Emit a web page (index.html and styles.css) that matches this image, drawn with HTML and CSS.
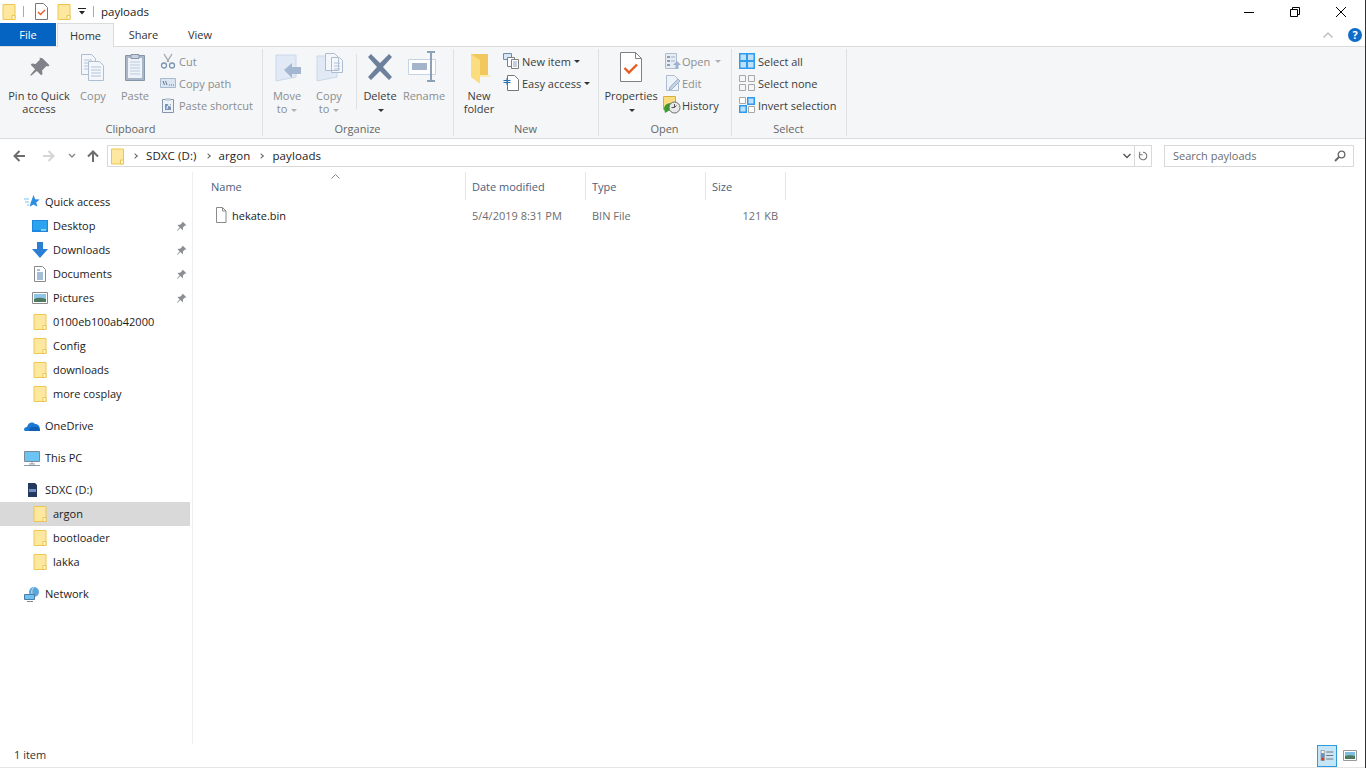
FILE: index.html
```html
<!DOCTYPE html>
<html lang="en">
<head>
    <meta charset="UTF-8">
    <meta name="viewport" content="width=device-width, initial-scale=1.0">
    <title>payloads</title>
    <link rel="stylesheet" href="styles.css">
</head>
<body>
    <svg class="defs" aria-hidden="true">
        <symbol id="folder" viewBox="0 0 13 16">
            <path d="M.5.5h12v15h-12z" fill="#fee8a0" stroke="#ecc64f"/>
            <path d="M9.500 15.500v-4h3v4z" fill="#fff6d5" stroke="#ecc64f"/>
        </symbol>
        <symbol id="pin" viewBox="0 0 16 16">
            <path d="M10 1l5 5-1 1-1-.4-3 3 .3 2.600-1 1-3-3-4 4-.9-.9 4-4-3-3 1-1 2.600.3 3-3L9 2z" fill="#8b8f94"/>
        </symbol>
        <symbol id="doc" viewBox="0 0 16 16">
            <path d="M3.500.5h6l3.500 3.500v11.500h-9.500z" fill="#fff" stroke="#8a8a8a"/>
            <path d="M9.500.5v3.500h3.500" fill="none" stroke="#8a8a8a"/>
        </symbol>
    </svg>

    <div class="titlebar">
        <svg class="qat-folder"><use href="#folder"/></svg>
        <span class="qat-sep"></span>
        <svg class="qat-props" viewBox="0 0 13 17">
            <path d="M.5.5h8l4 4v12h-12z" fill="#fff" stroke="#777"/>
            <path d="M3 9l2.500 2.500 4.500-4.500" fill="none" stroke="#e8562a" stroke-width="1.400"/>
        </svg>
        <svg class="qat-folder qat-folder2"><use href="#folder"/></svg>
        <svg class="qat-drop" viewBox="0 0 8 7"><path d="M0 0h8v1h-8zM1 3h6l-3 3.500z" fill="#222"/></svg>
        <span class="qat-sep qat-sep2"></span>
        <span class="title">payloads</span>
        <div class="win-btns">
            <svg viewBox="0 0 10 10"><path d="M0 5.500h10" stroke="#000"/></svg>
            <svg viewBox="0 0 10 10"><path d="M.5 2.500h7v7h-7zM2.500 2.500v-2h7v7h-2" fill="none" stroke="#000"/></svg>
            <svg viewBox="0 0 10 10"><path d="M0 0l10 10M10 0l-10 10" stroke="#000" stroke-width="1"/></svg>
        </div>
    </div>

    <div class="tabs">
        <div class="tab tab-file">File</div>
        <div class="tab tab-active">Home</div>
        <div class="tab tab-share">Share</div>
        <div class="tab tab-view">View</div>
        <svg class="ribbon-toggle" viewBox="0 0 10 6"><path d="M.5 5.500l4.500-4.500 4.500 4.500" fill="none" stroke="#b5b5b5" stroke-width="1.200"/></svg>
        <div class="help">?</div>
    </div>

    <div class="ribbon">
        <section class="group group-clipboard">
            <div class="group-body">
                <div class="big big-pin">
                    <svg class="big-icon" viewBox="0 0 32 32"><path d="M20 6l8 8-1.500 1.500-2-.6-5 5 .5 4.100-1.500 1.500-5-5-6.500 5.500-1-1 5.500-6.500-5-5 1.500-1.500 4.100.5 5-5-.6-2z" fill="#7f8389"/></svg>
                    <span class="big-label">Pin to Quick<br>access</span>
                </div>
                <div class="big big-copy off">
                    <svg class="big-icon" viewBox="0 0 32 32">
                        <path d="M4.500 3.500h10l4 4v16h-14z" fill="#f3f6fb" stroke="#aebdd0"/>
                        <path d="M11.500 10.500h11l4 4v15h-15z" fill="#f3f6fb" stroke="#aebdd0"/>
                        <path d="M7 9h8M7 12h4M7 15h4M7 18h4M14 16h10M14 19h10M14 22h10M14 25h10" stroke="#b4c4d8"/>
                    </svg>
                    <span class="big-label">Copy</span>
                </div>
                <div class="big big-paste off">
                    <svg class="big-icon" viewBox="0 0 32 32">
                        <path d="M6.500 4.500h19v25h-19z" fill="#a9b6c7" stroke="#8696aa"/>
                        <path d="M9 7h14v20h-14z" fill="#eef3fa"/>
                        <path d="M12 3.500h8v4h-8z" fill="#c8d2de" stroke="#8696aa"/>
                        <path d="M11 11h10M11 14h10M11 17h10M11 20h10M11 23h10" stroke="#bccadb"/>
                    </svg>
                    <span class="big-label">Paste</span>
                </div>
                <div class="small-col small-clipboard off">
                    <div class="small">
                        <svg viewBox="0 0 16 16"><path d="M4 1l5 8M12 1l-5 8" stroke="#a4a9b0" stroke-width="1.400"/><circle cx="4" cy="12.500" r="2.500" fill="none" stroke="#7b93b4" stroke-width="1.300"/><circle cx="12" cy="12.500" r="2.500" fill="none" stroke="#7b93b4" stroke-width="1.300"/></svg>
                        Cut
                    </div>
                    <div class="small">
                        <svg viewBox="0 0 16 16"><path d="M.5 3.500h15v9h-15z" fill="#dbe5f1" stroke="#a9b9cd"/><path d="M3 6l1.500 4M5.500 6l1.500 4M9 10h1M11 10h1M13 10h1" stroke="#65758a"/></svg>
                        Copy path
                    </div>
                    <div class="small">
                        <svg viewBox="0 0 16 16"><path d="M2.500 2.500h11v13h-11z" fill="#eef3fa" stroke="#8696aa"/><path d="M5.500 1h5v3h-5z" fill="#c8d2de"/><path d="M5 7h6v6h-6z" fill="#7b93b4"/><path d="M7 12c0-3 1-4 3-4M8 7.800h2.200v2" fill="none" stroke="#fff"/></svg>
                        Paste shortcut
                    </div>
                </div>
            </div>
            <div class="group-label">Clipboard</div>
        </section>

        <section class="group group-organize">
            <div class="group-body">
                <div class="big big-move off">
                    <svg class="big-icon" viewBox="0 0 32 32">
                        <path d="M5 4h20v22l-20 4z" fill="#e0e9f5" stroke="#cbd8e8"/>
                        <path d="M13 19l8-7v4h9v7h-9v4z" fill="#a3b7d0"/>
                    </svg>
                    <span class="big-label">Move<br>to <i class="caret"></i></span>
                </div>
                <div class="big big-copyto off">
                    <svg class="big-icon" viewBox="0 0 32 32">
                        <path d="M4 5h20v21l-20 4z" fill="#e0e9f5" stroke="#cbd8e8"/>
                        <path d="M12.500 2.500h9l4 4v13h-13zM18.500 6.500h8l3 3v12h-11z" fill="#f3f6fb" stroke="#aebdd0"/>
                        <path d="M21 12h6M21 15h6M21 18h6" stroke="#b4c4d8"/>
                    </svg>
                    <span class="big-label">Copy<br>to <i class="caret"></i></span>
                </div>
                <span class="vsep"></span>
                <div class="big big-delete">
                    <svg class="big-icon" viewBox="0 0 32 32"><path d="M4 6l3-3 9 9 9-9 3 3-9 10 9 10-3 3-9-9-9 9-3-3 9-10z" fill="#6d809c"/></svg>
                    <span class="big-label">Delete<br><i class="caret caret-dark"></i></span>
                </div>
                <div class="big big-rename off">
                    <svg class="big-icon" viewBox="0 0 32 32">
                        <path d="M.5 8.500h27v15h-27z" fill="#fff" stroke="#c5d3e4"/>
                        <path d="M4 12h15v7h-15z" fill="#a4b5cb"/>
                        <path d="M19 1h8M19 30h8M23 1v29" stroke="#8da0b8" stroke-width="2"/>
                    </svg>
                    <span class="big-label">Rename</span>
                </div>
            </div>
            <div class="group-label">Organize</div>
        </section>

        <section class="group group-new">
            <div class="group-body">
                <div class="big big-folder">
                    <svg class="big-icon" viewBox="0 0 32 32">
                        <path d="M8 3h17v21l-17 1z" fill="#f0c85c"/>
                        <path d="M8 3l9 6v24l-9-7z" fill="#fbdc7e"/>
                        <path d="M17 24h10v2h-10z" fill="#fdecb0"/>
                    </svg>
                    <span class="big-label">New<br>folder</span>
                </div>
                <div class="small-col small-new">
                    <div class="small">
                        <svg viewBox="0 0 16 16"><path d="M.5.5h8v6h-8z" fill="#d4e6f7" stroke="#6e8caa"/><path d="M4.500 4.500h7v9h-7z" fill="#fff" stroke="#7f7f7f"/><path d="M8.500 6.500h7v9h-7z" fill="#fff" stroke="#7f7f7f"/><path d="M10 9h4M10 11h4M10 13h4" stroke="#8aa3bf"/></svg>
                        New item <i class="caret caret-dark caret-inline"></i>
                    </div>
                    <div class="small">
                        <svg viewBox="0 0 16 16"><path d="M4.500.5h7l4 4v11h-11z" fill="#fff" stroke="#777"/><path d="M.5 5.500h7M.5 7.500h7M4 3v7" stroke="#2a6fb0"/></svg>
                        Easy access <i class="caret caret-dark caret-inline"></i>
                    </div>
                </div>
            </div>
            <div class="group-label">New</div>
        </section>

        <section class="group group-open">
            <div class="group-body">
                <div class="big big-props">
                    <svg class="big-icon" viewBox="0 0 32 32">
                        <path d="M5.500 1.500h15l6 6v23h-21z" fill="#fff" stroke="#808080"/>
                        <path d="M20.500 1.500v6h6" fill="none" stroke="#808080"/>
                        <path d="M9.500 17l4.500 4.500 8-8" fill="none" stroke="#ea5b23" stroke-width="2.400"/>
                    </svg>
                    <span class="big-label">Properties<br><i class="caret caret-dark"></i></span>
                </div>
                <div class="small-col small-open">
                    <div class="small off">
                        <svg viewBox="0 0 16 16"><path d="M.5.5h11v15h-11z" fill="#e6ecf4" stroke="#aebdd0"/><path d="M2 3h3v2h-3zM2 7h3v2h-3zM2 11h3v2h-3z" fill="#8da0b8"/><path d="M6 4h4M6 8h4" stroke="#9eb0c6"/><path d="M12 8l4 4h-2.500v4h-3v-4h-2.500z" fill="#9db2cd"/></svg>
                        Open <i class="caret caret-inline"></i>
                    </div>
                    <div class="small off">
                        <svg viewBox="0 0 16 16"><path d="M1.500.5h8l4 4v11h-12z" fill="#eef3fa" stroke="#aebdd0"/><path d="M13 4l2 2-8 8-3 1 1-3z" fill="#c4d3e6" stroke="#9db2cd"/></svg>
                        Edit
                    </div>
                    <div class="small small-history">
                        <svg viewBox="0 0 18 18"><path d="M.5.5h12v13h-12z" fill="#fbdd7f" stroke="#d4ae42"/><path d="M1 12c1-4 4-5 8-5l-2 7-5 3z" fill="#3a9c2e"/><circle cx="11.500" cy="11.500" r="5.500" fill="#e9e9e9" stroke="#6a6a6a"/><path d="M11.500 8v3.500h-3M11.500 11.500l2-2" stroke="#555" fill="none"/></svg>
                        History
                    </div>
                </div>
            </div>
            <div class="group-label">Open</div>
        </section>

        <section class="group group-select">
            <div class="group-body">
                <div class="small-col small-select">
                    <div class="small">
                        <svg viewBox="0 0 16 16"><path d="M0 0h16v16h-16z" fill="#2d9bef"/><path d="M1.500 1.500h5.500v5.500h-5.500zM9 1.500h5.500v5.500h-5.500zM1.500 9h5.500v5.500h-5.500zM9 9h5.500v5.500h-5.500z" fill="#bfe0f8"/></svg>
                        Select all
                    </div>
                    <div class="small">
                        <svg viewBox="0 0 16 16"><path d="M.5.5h6v6h-6zM9.500.5h6v6h-6zM.5 9.500h6v6h-6zM9.500 9.500h6v6h-6z" fill="none" stroke="#a8a8a8"/></svg>
                        Select none
                    </div>
                    <div class="small">
                        <svg viewBox="0 0 16 16"><path d="M.5.5h6v6h-6zM9.500 9.500h6v6h-6z" fill="#fff" stroke="#a8a8a8"/><path d="M8 0h8v8h-8zM0 8h8v8h-8z" fill="#2d9bef"/><path d="M9.500 1.500h5v5h-5zM1.500 9.500h5v5h-5z" fill="#bfe0f8"/></svg>
                        Invert selection
                    </div>
                </div>
            </div>
            <div class="group-label">Select</div>
        </section>
    </div>

    <div class="navbar">
        <div class="nav-btns">
            <svg class="nav-back" viewBox="0 0 12 12"><path d="M6.500 1l-5 5 5 5M1.500 6h10.500" fill="none" stroke="#6d6d6d" stroke-width="2"/></svg>
            <svg class="nav-fwd" viewBox="0 0 12 12"><path d="M5.500 1l5 5-5 5M10.500 6h-10.500" fill="none" stroke="#d5d5d5" stroke-width="2"/></svg>
            <svg class="nav-recent" viewBox="0 0 8 6"><path d="M1 1l3 3 3-3" fill="none" stroke="#888" stroke-width="1.400"/></svg>
            <svg class="nav-up" viewBox="0 0 12 12"><path d="M1 6.500l5-5 5 5M6 1.500v10.500" fill="none" stroke="#6d6d6d" stroke-width="2"/></svg>
        </div>
        <div class="address">
            <svg class="addr-folder"><use href="#folder"/></svg>
            <i class="crumb-sep"></i><span>SDXC (D:)</span>
            <i class="crumb-sep"></i><span>argon</span>
            <i class="crumb-sep"></i><span>payloads</span>
            <div class="addr-end">
                <svg class="addr-drop" viewBox="0 0 8 6"><path d="M.5 1l3.500 3.500 3.500-3.500" fill="none" stroke="#555" stroke-width="1.400"/></svg>
                <svg class="addr-refresh" viewBox="0 0 12 12"><path d="M6 1.500a4.500 4.500 0 1 1-4 2.500M2 1v3.500h3.500" fill="none" stroke="#777" stroke-width="1.300"/></svg>
            </div>
        </div>
        <div class="search">
            <span>Search payloads</span>
            <svg viewBox="0 0 12 12"><circle cx="7.500" cy="4.500" r="3.300" fill="none" stroke="#666" stroke-width="1.300"/><path d="M5 7l-4 4" stroke="#666" stroke-width="1.800"/></svg>
        </div>
    </div>

    <div class="main">
        <nav class="sidebar">
            <div class="side-row side-top">
                <svg viewBox="0 0 16 16"><path d="M9.500 1l1.700 4.200 4.500.3-3.500 2.900 1.200 4.400-3.900-2.400-3.900 2.400 1.200-4.400z" fill="#2c8de0"/><path d="M0 5h5M1 8h4M3 11h2" stroke="#7cc0f2"/></svg>
                Quick access
            </div>
            <div class="side-row side-sub">
                <svg viewBox="0 0 16 16"><path d="M0 2h16v12h-16z" fill="#1b87de"/><path d="M1 3h14v9h-14z" fill="#2ba4f0"/><path d="M9 12h5" stroke="#fff"/></svg>
                Desktop <svg class="side-pin"><use href="#pin"/></svg>
            </div>
            <div class="side-row side-sub">
                <svg viewBox="0 0 16 16"><path d="M5 0h6v7h5l-8 9-8-9h5z" fill="#2a7fd5"/></svg>
                Downloads <svg class="side-pin"><use href="#pin"/></svg>
            </div>
            <div class="side-row side-sub">
                <svg viewBox="0 0 16 16"><path d="M2.500.5h8l3 3v12h-11z" fill="#fff" stroke="#888"/><path d="M5 4h3M5 7h6M5 9h6M5 11h6M5 13h6" stroke="#4a7eb0"/></svg>
                Documents <svg class="side-pin"><use href="#pin"/></svg>
            </div>
            <div class="side-row side-sub">
                <svg viewBox="0 0 16 16"><path d="M.5 2.500h15v11h-15z" fill="#fff" stroke="#8a8a8a"/><path d="M2 4h12v5h-12z" fill="#8ec4e8"/><path d="M2 9c4-2 8-1 12 0v3h-12z" fill="#4c7a5e"/></svg>
                Pictures <svg class="side-pin"><use href="#pin"/></svg>
            </div>
            <div class="side-row side-sub"><svg><use href="#folder"/></svg>0100eb100ab42000</div>
            <div class="side-row side-sub"><svg><use href="#folder"/></svg>Config</div>
            <div class="side-row side-sub"><svg><use href="#folder"/></svg>downloads</div>
            <div class="side-row side-sub"><svg><use href="#folder"/></svg>more cosplay</div>

            <div class="side-row side-top side-gap">
                <svg viewBox="0 0 16 16"><path d="M0 12c0-2 1-3 3-3 1-4 5-6 8-3 3 0 5 2 5 6l-1 1h-14z" fill="#1a79d4"/><path d="M5 13c0-3 2-5 5-4 3-1 6 1 6 4z" fill="#0e5fb5"/></svg>
                OneDrive
            </div>
            <div class="side-row side-top side-gap">
                <svg viewBox="0 0 16 16"><path d="M.5 1.500h15v10h-15z" fill="#6cc4f4" stroke="#7d8a96"/><path d="M5 14h6M8 12v2M0 15.500h16" stroke="#8d99a5"/></svg>
                This PC
            </div>
            <div class="side-row side-top side-gap">
                <svg viewBox="0 0 16 16"><path d="M4 1h7l2 2v12h-9z" fill="#24395e"/><path d="M5 7h7v3h-7z" fill="#6d8fc0"/></svg>
                SDXC (D:)
            </div>
            <div class="side-row side-sub side-selected"><svg><use href="#folder"/></svg>argon</div>
            <div class="side-row side-sub"><svg><use href="#folder"/></svg>bootloader</div>
            <div class="side-row side-sub"><svg><use href="#folder"/></svg>lakka</div>

            <div class="side-row side-top side-gap">
                <svg viewBox="0 0 16 16"><circle cx="10" cy="6" r="5" fill="#5ba7dc"/><path d="M10 1c-3 3-3 7 0 10" fill="none" stroke="#cde6f6"/><path d="M.5 8.500h10v5h-10z" fill="#6cc4f4" stroke="#4e7da0"/><path d="M3 15.500h6" stroke="#7d8a96"/></svg>
                Network
            </div>
        </nav>

        <div class="files">
            <svg class="sort-arrow" viewBox="0 0 9 5"><path d="M.5 4.500l4-4 4 4" fill="none" stroke="#888"/></svg>
            <div class="file-head">
                <div class="col-name">Name</div>
                <div>Date modified</div>
                <div>Type</div>
                <div>Size</div>
            </div>
            <div class="file-row">
                <div class="col-name file-name"><svg><use href="#doc"/></svg>hekate.bin</div>
                <div>5/4/2019 8:31 PM</div>
                <div>BIN File</div>
                <div class="col-size">121 KB</div>
            </div>
        </div>
    </div>

    <div class="statusbar">
        <span class="status-text">1 item</span>
        <div class="view-btns">
            <div class="view-btn view-active">
                <svg viewBox="0 0 16 14"><path d="M.5.5h4v4h-4z" fill="#fff" stroke="#888"/><path d="M.5 5h4v4h-4z" fill="#5b8fe0" stroke="#888"/><path d="M.5 9.500h4v4h-4z" fill="#d03a2a" stroke="#888"/><path d="M7 2.500h9M7 7h9M7 11.500h9" stroke="#777" stroke-width="1.400"/></svg>
            </div>
            <div class="view-btn view-thumb">
                <svg viewBox="0 0 14 11"><path d="M.5.500h13v10h-13z" fill="#fff" stroke="#999"/><path d="M2 2h10v4h-10z" fill="#7fbde0"/><path d="M2 6c3-1 7-1 10 0v3h-10z" fill="#4c7a5e"/></svg>
            </div>
        </div>
    </div>
</body>
</html>
```

FILE: styles.css
```css
html, body {
    margin: 0;
    height: 100%;
}
body {
    width: 1366px;
    height: 768px;
    box-sizing: border-box;
    border-right: 1px solid #333;
    overflow: hidden;
    display: flex;
    flex-direction: column;
    font-family: "Open Sans", sans-serif;
    font-size: 11px;
    color: #1a1a1a;
    background: #fff;
}
.defs {
    position: absolute;
    width: 0;
    height: 0;
}
svg {
    display: block;
    flex: none;
}

/* title bar */
.titlebar {
    height: 23px;
    display: flex;
    align-items: center;
}
.qat-folder {
    width: 14px;
    height: 16px;
    margin-left: 2px;
}
.qat-folder2 {
    margin-left: 9px;
}
.qat-sep {
    width: 1px;
    height: 11px;
    background: #aaa;
    margin-left: 7px;
}
.qat-props {
    width: 13px;
    height: 17px;
    margin-left: 11px;
}
.qat-drop {
    width: 8px;
    height: 7px;
    margin-left: 7px;
}
.title {
    margin-left: 7px;
    font-size: 11.5px;
}
.win-btns {
    margin-left: auto;
    display: flex;
    gap: 36px;
    padding-right: 19px;
}
.win-btns svg {
    width: 10px;
    height: 10px;
}

/* ribbon tabs */
.tabs {
    height: 24px;
    display: flex;
    align-items: stretch;
    border-bottom: 1px solid #dadbdc;
    box-sizing: border-box;
}
.tab {
    display: flex;
    align-items: center;
    justify-content: center;
    color: #333;
}
.tab-file {
    width: 56px;
    background: #0563c1;
    color: #fff;
}
.tab-active {
    width: 57px;
    margin-left: 1px;
    margin-bottom: -1px;
    background: #f5f6f7;
    border: 1px solid #dadbdc;
    border-bottom: none;
    box-sizing: border-box;
}
.tab-share {
    width: 59px;
}
.tab-view {
    width: 54px;
}
.ribbon-toggle {
    width: 10px;
    height: 6px;
    margin-left: auto;
    align-self: center;
}
.help {
    width: 14px;
    height: 14px;
    border-radius: 50%;
    background: #0f6cc8;
    color: #fff;
    font-weight: 700;
    font-size: 11px;
    line-height: 14px;
    text-align: center;
    align-self: center;
    margin: 0 3px 0 15px;
}

/* ribbon */
.ribbon {
    height: 91px;
    background: #f5f6f7;
    border-bottom: 1px solid #dadbdc;
    display: flex;
    color: #3c3c3c;
}
.group {
    box-sizing: border-box;
    height: 87px;
    margin-top: 2px;
    display: flex;
    flex-direction: column;
    border-right: 1px solid #dfe0e1;
}
.group-clipboard { width: 263px; }
.group-organize { width: 191px; }
.group-new { width: 145px; }
.group-open { width: 133px; }
.group-select { width: 115px; }
.group-body {
    flex: 1;
    display: flex;
    padding-top: 1px;
}
.group-label {
    height: 15px;
    padding-right: 1px;
    text-align: center;
    color: #666;
    line-height: 15px;
}
.group-clipboard .group-body { padding-left: 4px; }
.group-organize .group-body { padding-left: 3px; }
.group-new .group-body { padding-left: 8px; }
.group-open .group-body { padding-left: 4px; }
.group-select .group-body { padding-left: 7px; }

.big {
    display: flex;
    flex-direction: column;
    align-items: center;
    text-align: center;
}
.big-icon {
    width: 32px;
    height: 32px;
    margin: 1px 0 6px;
}
.big-label {
    line-height: 13px;
    white-space: nowrap;
}
.big-pin { width: 70px; }
.big-pin .big-icon { width: 28px; }
.big-copy { width: 38px; }
.big-paste { width: 46px; }
.big-move { width: 42px; }
.big-copyto { width: 42px; }
.big-delete { width: 44px; }
.big-rename { width: 44px; }
.big-folder { width: 34px; }
.big-props { width: 56px; }
.off {
    color: #8a8d91;
}
.vsep {
    width: 1px;
    height: 55px;
    background: #dfe0e1;
    margin: 4px 1px 0 6px;
}
.small-col {
    display: flex;
    flex-direction: column;
}
.small {
    height: 22px;
    display: flex;
    align-items: center;
    gap: 3px;
    white-space: nowrap;
}
.small svg {
    width: 16px;
    height: 16px;
}
.small-clipboard { margin-left: 2px; }
.small-new { margin-left: 7px; }
.small-open { margin-left: 4px; }
.small-open .small { padding-left: 2px; gap: 1px; }
.small-open .caret { margin-left: 4px; }
.small-open .small-history { padding-left: 0; gap: 1px; }
.small-open .small-history svg { width: 18px; height: 18px; }
.caret {
    display: inline-block;
    width: 0;
    height: 0;
    border-left: 3px solid transparent;
    border-right: 3px solid transparent;
    border-top: 3px solid #b0b0b0;
    vertical-align: middle;
    margin-left: 1px;
}
.caret-dark {
    border-top-color: #333;
}
.caret-inline {
    margin-left: 0;
}

/* address row */
.navbar {
    height: 33px;
    box-sizing: border-box;
    padding-top: 6px;
    display: flex;
    align-items: flex-start;
}
.nav-btns {
    width: 107px;
    height: 21px;
    display: flex;
    align-items: center;
    padding-left: 13px;
    box-sizing: border-box;
}
.nav-back, .nav-fwd, .nav-up {
    width: 12px;
    height: 12px;
}
.nav-fwd {
    margin-left: 18px;
}
.nav-recent {
    width: 8px;
    height: 6px;
    margin-left: 13px;
}
.nav-up {
    margin-left: 11px;
}
.address {
    width: 1045px;
    height: 22px;
    box-sizing: border-box;
    border: 1px solid #d9d9d9;
    display: flex;
    align-items: center;
    color: #222;
    font-size: 11.5px;
}
.address span {
    margin-bottom: 2px;
    letter-spacing: 0.1px;
}
.addr-folder {
    width: 13px;
    height: 17px;
    margin-left: 3px;
}
.crumb-sep {
    width: 3px;
    height: 3px;
    border-top: 1px solid #666;
    border-right: 1px solid #666;
    transform: rotate(45deg);
    margin: 0 9px;
}
.addr-end {
    margin-left: auto;
    height: 100%;
    display: flex;
    align-items: center;
}
.addr-drop {
    width: 8px;
    height: 6px;
    margin-right: 3px;
}
.addr-refresh {
    width: 10px;
    height: 20px;
    padding: 0 3px;
    border-left: 1px solid #d9d9d9;
    box-sizing: content-box;
}
.search {
    width: 190px;
    height: 22px;
    margin-left: 12px;
    box-sizing: border-box;
    border: 1px solid #d9d9d9;
    display: flex;
    align-items: center;
    justify-content: space-between;
    padding: 0 7px 0 8px;
    color: #6d6d6d;
}
.search span {
    margin-bottom: 2px;
}
.search svg {
    width: 12px;
    height: 12px;
}

/* main area */
.main {
    flex: 1;
    display: flex;
    min-height: 0;
}
.sidebar {
    width: 193px;
    box-sizing: border-box;
    border-right: 1px solid #efefef;
    padding-top: 18px;
}
.side-row {
    width: 190px;
    height: 24px;
    display: flex;
    align-items: center;
    position: relative;
    white-space: nowrap;
    color: #1a1a1a;
    padding-bottom: 2px;
}
.side-row svg {
    width: 16px;
    height: 16px;
    margin-top: 2px;
}
.side-top {
    padding-left: 24px;
    box-sizing: border-box;
    gap: 5px;
}
.side-sub {
    padding-left: 32px;
    box-sizing: border-box;
    gap: 5px;
}
.side-row .side-pin {
    width: 11px;
    height: 11px;
    position: absolute;
    left: 176px;
    top: 5px;
}
.side-gap {
    margin-top: 8px;
}
.side-selected {
    background: #d9d9d9;
}
.files {
    flex: 1;
    position: relative;
}
.sort-arrow {
    position: absolute;
    left: 138px;
    top: 2px;
    width: 9px;
    height: 5px;
}
.file-head, .file-row {
    display: grid;
    grid-template-columns: 273px 120px 120px 80px;
}
.file-head {
    height: 28px;
    color: #4c607a;
    margin-bottom: 4px;
}
.file-head > div {
    padding-left: 6px;
    border-right: 1px solid #e5e5e5;
    display: flex;
    align-items: center;
}
.file-head .col-name {
    padding-left: 18px;
}
.file-row {
    height: 22px;
    color: #6d6d6d;
}
.file-row > div {
    padding-left: 6px;
    display: flex;
    align-items: center;
}
.file-row .file-name {
    padding-left: 20px;
    gap: 3px;
    color: #1a1a1a;
}
.file-name svg {
    width: 16px;
    height: 16px;
}
.file-row .col-size {
    justify-content: flex-end;
    padding-right: 8px;
}

/* status bar */
.statusbar {
    height: 24px;
    box-sizing: border-box;
    border-bottom: 1px solid #e5e5e5;
    display: flex;
    align-items: center;
    justify-content: space-between;
    padding-left: 14px;
    color: #333;
}
.status-text {
    margin-bottom: 2px;
}
.view-btns {
    display: flex;
    align-items: center;
    margin-right: 5px;
}
.view-btn {
    width: 20px;
    height: 22px;
    display: flex;
    align-items: center;
    justify-content: center;
    box-sizing: border-box;
    margin-left: 3px;
}
.view-btn svg {
    width: 14px;
    height: 11px;
}
.view-active {
    background: #c5e6f7;
    border: 1px solid #2d9bdc;
}
```
